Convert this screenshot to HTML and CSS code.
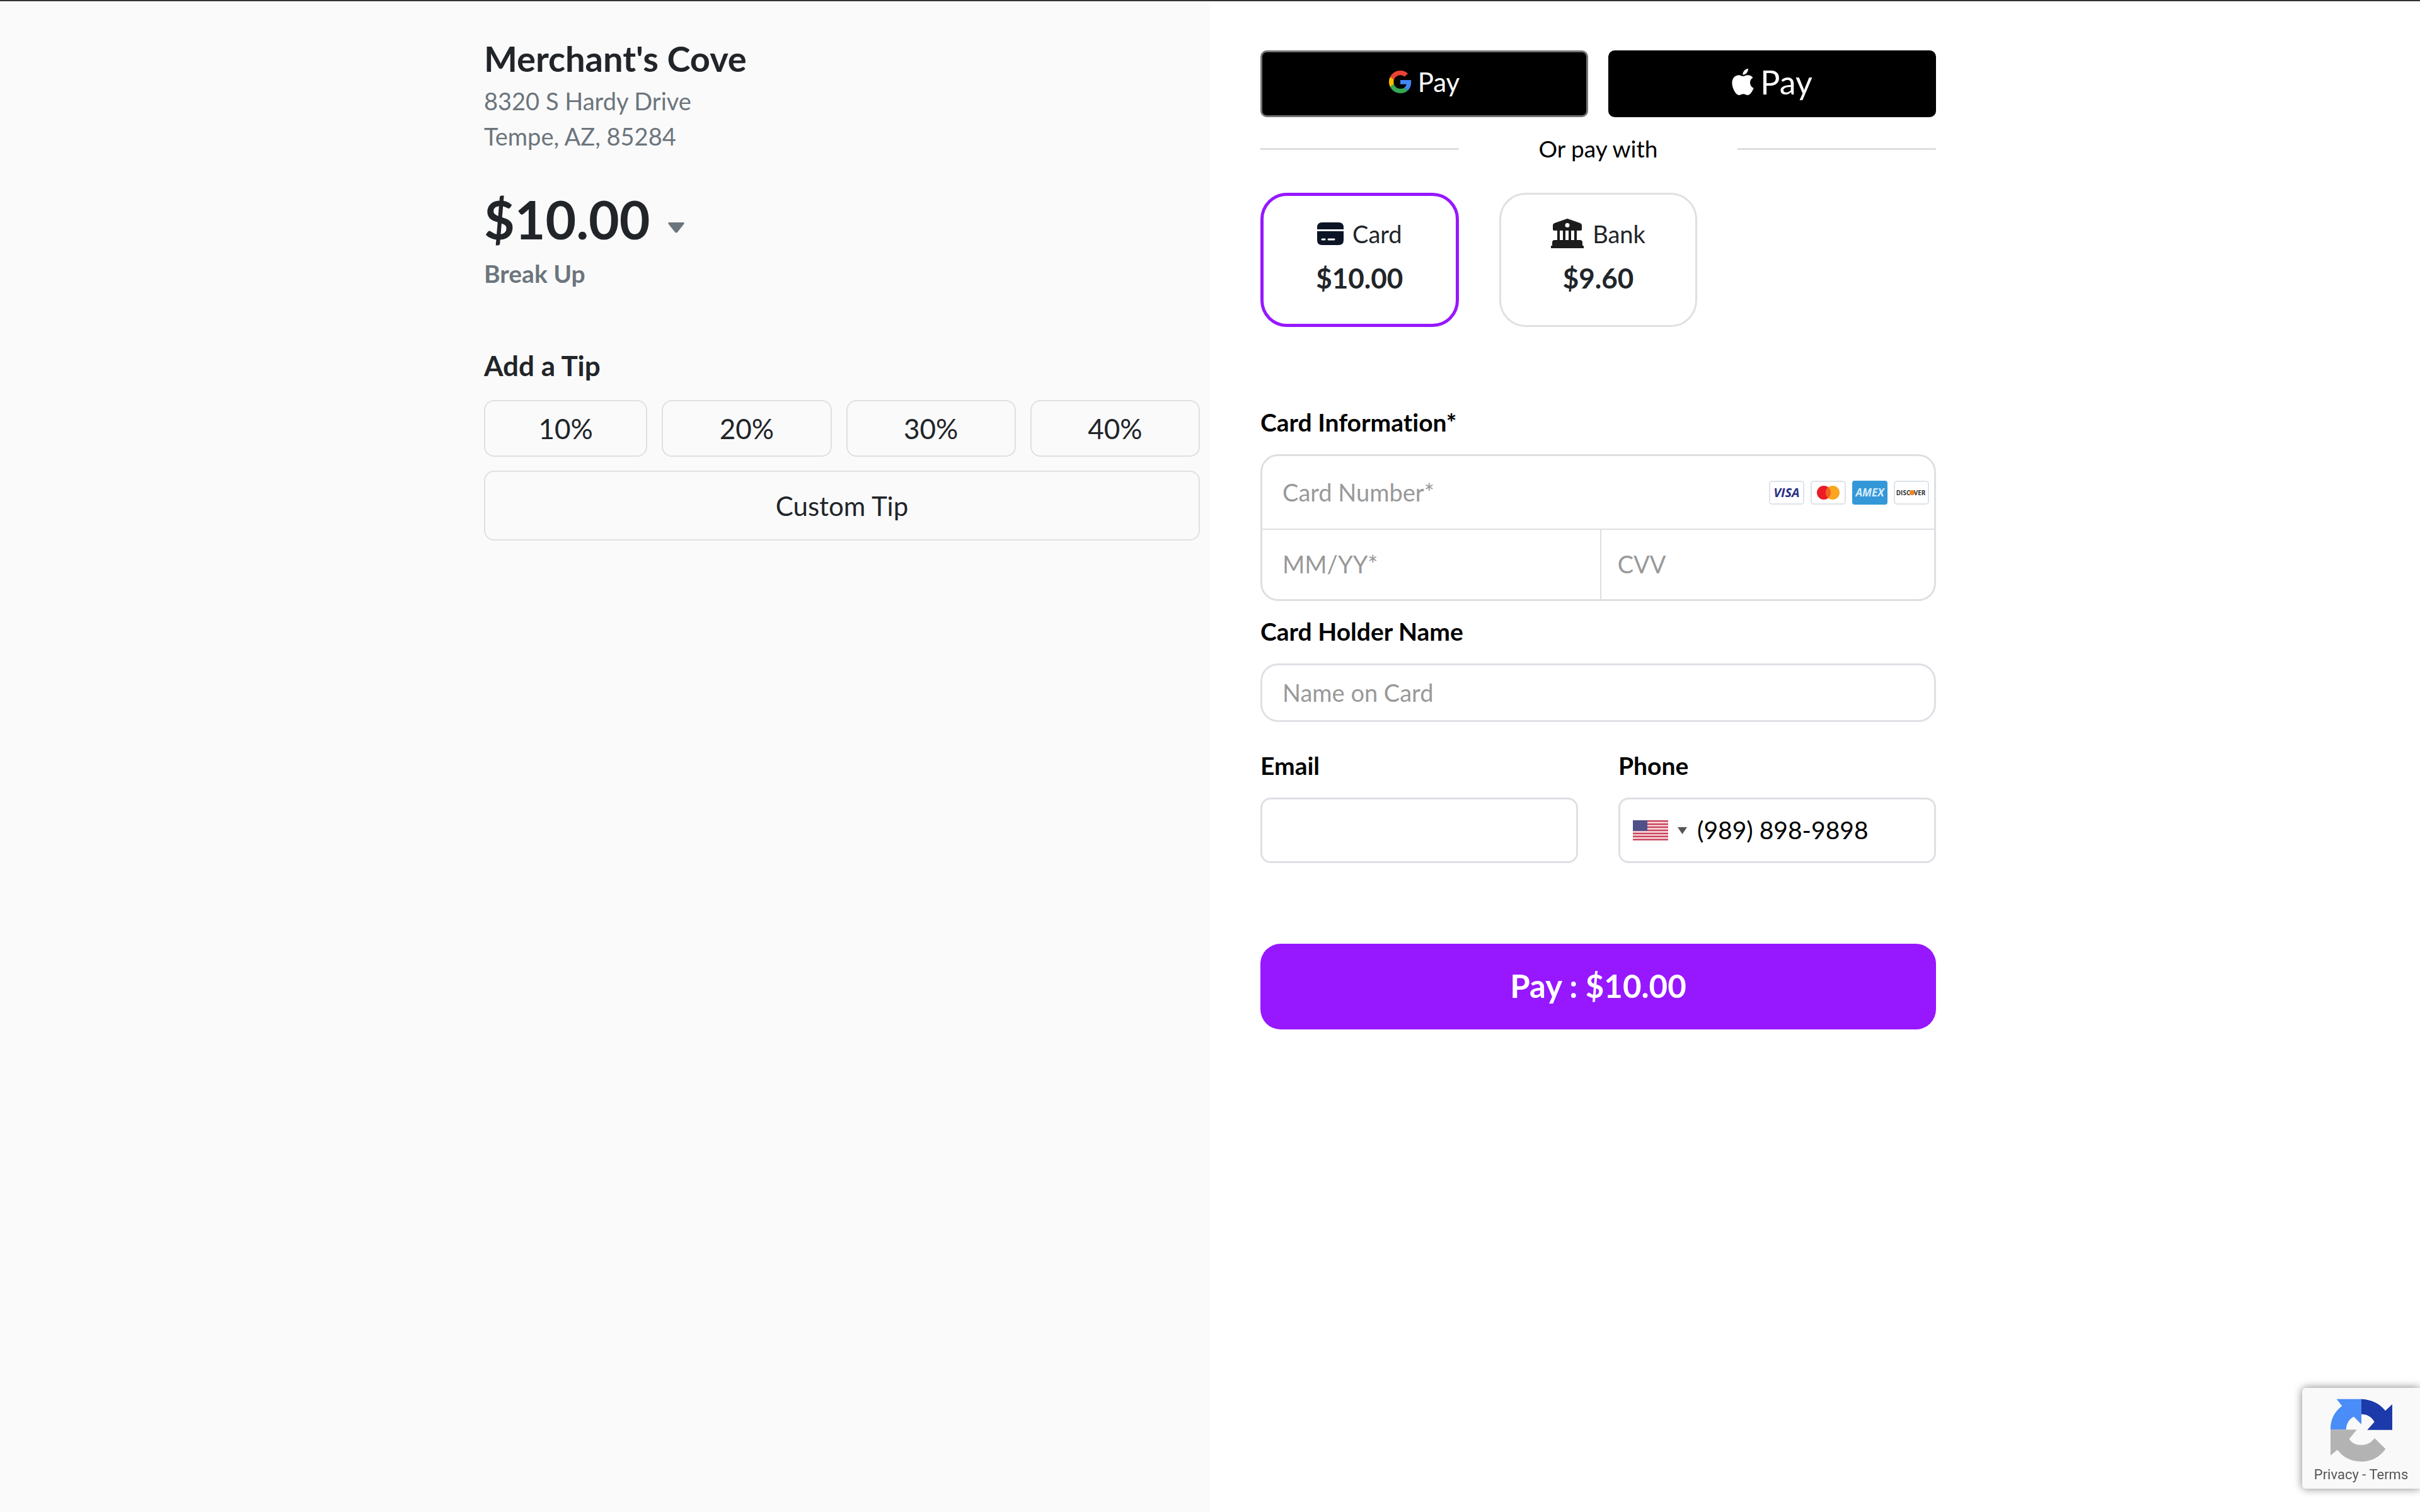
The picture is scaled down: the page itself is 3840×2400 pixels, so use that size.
FILE: index.html
```
<!DOCTYPE html>
<html lang="en">
<head>
  <meta charset="UTF-8">
  <title>Merchant's Cove</title>
  <meta name="viewport" content="width=device-width, initial-scale=1.0">
  <link rel="stylesheet" href="styles.css">
</head>
<body>
  <main class="checkout">
    <section class="summary">
      <h1>Merchant's Cove</h1>
      <p class="address">8320 S Hardy Drive<br>Tempe, AZ, 85284</p>

      <button class="amount" type="button">
        $10.00
        <svg class="amount-caret" viewBox="0 0 26 17"><path d="M2 0H24Q27 0 25 3L15 15.500Q13 17.500 11 15.500L1 3Q-1 0 2 0Z"/></svg>
      </button>
      <p class="breakup">Break Up</p>

      <h2>Add a Tip</h2>
      <div class="tips">
        <button type="button">10%</button>
        <button type="button">20%</button>
        <button type="button">30%</button>
        <button type="button">40%</button>
      </div>
      <button class="custom-tip" type="button">Custom Tip</button>
    </section>

    <form class="payment">
      <div class="wallets">
        <button class="gpay" type="button" aria-label="Google Pay">
          <svg viewBox="0 0 48 48">
            <path fill="#EA4335" d="M24 9.500c3.540 0 6.710 1.220 9.210 3.600l6.850-6.850C35.900 2.380 30.470 0 24 0 14.620 0 6.510 5.380 2.560 13.220l7.980 6.190C12.430 13.720 17.740 9.500 24 9.500z"/>
            <path fill="#4285F4" d="M46.980 24.550c0-1.570-.15-3.090-.38-4.550H24v9.020h12.940c-.58 2.960-2.260 5.480-4.780 7.180l7.730 6c4.510-4.180 7.090-10.360 7.090-17.650z"/>
            <path fill="#FBBC05" d="M10.530 28.590c-.48-1.450-.76-2.990-.76-4.590s.27-3.140.76-4.590l-7.980-6.190C.92 16.460 0 20.120 0 24c0 3.880.92 7.540 2.560 10.780l7.970-6.190z"/>
            <path fill="#34A853" d="M24 48c6.480 0 11.930-2.130 15.890-5.810l-7.730-6c-2.150 1.450-4.920 2.300-8.160 2.300-6.260 0-11.570-4.220-13.470-9.910l-7.980 6.190C6.510 42.620 14.620 48 24 48z"/>
          </svg>
          <span>Pay</span>
        </button>
        <button class="applepay" type="button" aria-label="Apple Pay">
          <svg viewBox="2 0 20 24"><path fill="#fff" d="M12.152 6.896c-.948 0-2.415-1.078-3.960-1.040-2.040.027-3.910 1.183-4.961 3.014-2.117 3.675-.546 9.103 1.519 12.090 1.013 1.454 2.208 3.090 3.792 3.039 1.520-.065 2.090-.987 3.935-.987 1.831 0 2.350.987 3.960.948 1.637-.026 2.676-1.480 3.676-2.948 1.156-1.688 1.636-3.325 1.662-3.415-.039-.013-3.182-1.221-3.220-4.857-.026-3.040 2.480-4.494 2.597-4.559-1.429-2.090-3.623-2.324-4.390-2.376-2-.156-3.675 1.090-4.610 1.090zM15.530 3.830c.843-1.012 1.400-2.427 1.245-3.830-1.207.052-2.662.805-3.532 1.818-.78.896-1.454 2.338-1.273 3.714 1.338.104 2.715-.688 3.559-1.701"/></svg>
          <span>Pay</span>
        </button>
      </div>

      <div class="divider"><hr><span>Or pay with</span><hr></div>

      <div class="methods">
        <button class="method selected" type="button" aria-pressed="true">
          <span class="method-name">
            <svg class="card-icon" viewBox="0 0 42 36"><path fill="#0c1526" d="M0 11V8Q0 0 8 0H34Q42 0 42 8V11ZM0 14H42V28Q42 36 34 36H8Q0 36 0 28Z"/><path stroke="#fff" stroke-width="3" stroke-linecap="round" d="M8 27H12M18 27H27"/></svg>
            Card
          </span>
          <strong>$10.00</strong>
        </button>
        <button class="method" type="button" aria-pressed="false">
          <span class="method-name">
            <svg class="bank-icon" viewBox="0 0 52 47"><path fill="#1c1c1c" fill-rule="evenodd" d="M26 0L46 7Q49 8 49 11V17Q49 19 47 19H5Q3 19 3 17V11Q3 8 6 7ZM26 7A3.500 3.500 0 0 0 26 14A3.500 3.500 0 0 0 26 7Z"/><path fill="#1c1c1c" d="M10 19H14V35H10ZM19 19H23V35H19ZM28 19H32V35H28ZM37 19H41V35H37ZM6 34H46Q50 34 50 38V43H52V47H0V43H2V38Q2 34 6 34Z"/></svg>
            Bank
          </span>
          <strong>$9.60</strong>
        </button>
      </div>

      <label class="field-label card-label" for="card-number">Card Information*</label>
      <div class="card-box">
        <div class="card-number">
          <input id="card-number" type="text" placeholder="Card Number*">
          <span class="brands">
            <svg viewBox="0 0 56 38"><rect class="brand-frame" x="1" y="1" width="54" height="36" rx="4"/><text class="visa" x="28" y="26">VISA</text></svg>
            <svg viewBox="0 0 56 38"><rect class="brand-frame" x="1" y="1" width="54" height="36" rx="4"/><circle cx="21" cy="19" r="11" fill="#eb1c26"/><circle cx="35" cy="19" r="11" fill="#faa61e"/><path fill="#f26122" d="M28 10.500a11 11 0 0 1 0 17a11 11 0 0 1 0-17z"/></svg>
            <svg viewBox="0 0 56 38"><rect x="0" y="0" width="56" height="38" rx="4" fill="#3498d8"/><text class="amex" x="28" y="25">AMEX</text></svg>
            <svg viewBox="0 0 56 38"><rect class="brand-frame" x="1" y="1" width="54" height="36" rx="4"/><text class="discover" x="15" y="23">DISC</text><text class="discover" x="41" y="23">VER</text><circle cx="29" cy="19" r="4" fill="#f58220"/></svg>
          </span>
        </div>
        <div class="card-row">
          <input type="text" placeholder="MM/YY*" aria-label="Expiry date">
          <input type="text" placeholder="CVV" aria-label="CVV">
        </div>
      </div>

      <label class="field-label holder-label" for="holder">Card Holder Name</label>
      <input class="holder" id="holder" type="text" placeholder="Name on Card">

      <div class="contact">
        <div>
          <label class="field-label" for="email">Email</label>
          <input class="email" id="email" type="email">
        </div>
        <div>
          <label class="field-label" for="phone">Phone</label>
          <div class="phone">
            <button type="button" aria-label="Country">
              <svg class="flag" viewBox="0 0 56 32">
                <rect width="56" height="32" fill="#fbdfe2"/>
                <path stroke="#c9455c" stroke-width="2.500" d="M0 1.200H56M0 6.200H56M0 11.100H56M0 16H56M0 20.900H56M0 25.800H56M0 30.700H56"/>
                <rect width="23" height="17" fill="#50508a"/>
              </svg>
              <svg class="flag-caret" viewBox="0 0 15 11"><path fill="#555" d="M0 0H15L7.500 11Z"/></svg>
            </button>
            <input id="phone" type="tel" value="(989) 898-9898">
          </div>
        </div>
      </div>

      <button class="pay" type="submit">Pay : $10.00</button>
    </form>
  </main>

  <aside class="recaptcha">
    <svg viewBox="203 120 294 300">
      <path fill="#4a8df8" d="M350 122H232L258 155C220 182 203 220 203 268H277C278 240 292 216 314 206L350 243Z"/>
      <path fill="#1c3aa9" d="M350 122C398 124 440 145 464 178L497 147V269H378L412 231C398 205 375 194 350 194Z"/>
      <path fill="#b3b3b3" d="M203 268H328L292 312C305 333 325 341 350 341C375 341 397 330 413 308L465 360C438 397 400 420 350 420C302 420 262 400 236 364L203 391Z"/>
    </svg>
    <div><a href="#">Privacy</a> - <a href="#">Terms</a></div>
  </aside>
</body>
</html>
```
FILE: styles.css
```
* { box-sizing: border-box; }
body {
  margin: 0;
  font-family: "Lato", sans-serif;
  font-size: 38px;
  font-variant-ligatures: none;
  line-height: 56px;
  color: #212529;
  background-color: #fff;
}
h1, h2, p { margin: 0; }
button, input { font: inherit; color: inherit; margin: 0; }
button { padding: 0; border: none; background: none; cursor: pointer; }
svg { display: block; flex: none; }

.checkout {
  display: grid;
  grid-template-columns: 1fr 1fr;
  min-height: 100vh;
  border-top: 2px solid #333;
}

/* Left side */
.summary { padding: 58px 16px 58px 40%; background-color: #fafafa; }
.summary h1 { font-size: 56px; line-height: 66px; margin-bottom: 6px; }
.address { color: #6c757d; }
.amount {
  display: flex;
  align-items: center;
  gap: 28px;
  margin-top: 54px;
  font-size: 84px;
  font-weight: bold;
  line-height: 100px;
}
.amount-caret { width: 26px; margin-top: 26px; fill: #6c757d; }
.breakup { margin-top: 8px; color: #6c757d; font-size: 39px; font-weight: bold; }
.summary h2 { margin: 90px 0 27px; font-size: 44px; line-height: 56px; }
.tips { display: grid; grid-template-columns: 26fr 27fr 27fr 27fr; gap: 23px; }
.tips button, .custom-tip {
  border: 2px solid #dee0e2;
  border-radius: 16px;
}
.tips button { height: 90px; font-size: 44px; }
.custom-tip { width: 100%; height: 111px; margin-top: 22px; font-size: 42px; }

/* Right side */
.payment { padding: 78px 40% 78px 80px; }
.wallets { display: grid; grid-template-columns: 1fr 1fr; gap: 32px; }
.wallets button {
  display: flex;
  align-items: center;
  justify-content: center;
  gap: 10px;
  height: 106px;
  padding-bottom: 6px;
  border-radius: 10px;
  background-color: #000;
  color: #fff;
}
.wallets .gpay { border: 3px solid #757575; font-size: 42px; }
.gpay svg { width: 36px; }
.applepay { font-size: 52px; }
.applepay svg { width: 35px; }

.divider, .methods {
  display: grid;
  grid-template-columns: 1fr 1fr 1fr;
  column-gap: 64px;
}
.divider { align-items: center; margin: 22px 0 42px; font-size: 37px; color: #000; text-align: center; }
.divider hr { width: 100%; margin: 0; border: none; border-top: 3px solid #dedede; }

.method {
  display: flex;
  flex-direction: column;
  align-items: center;
  justify-content: center;
  gap: 14px;
  height: 213px;
  padding-bottom: 14px;
  border: 3px solid #e0e0e0;
  border-radius: 42px;
}
.method.selected { border: 5px solid #9717ff; }
.method-name { display: flex; align-items: center; gap: 14px; }
.method strong { font-size: 44px; }
.card-icon { width: 42px; }
.bank-icon { width: 52px; }

.field-label { display: block; margin-bottom: 23px; font-size: 39px; font-weight: bold; color: #000; }
.card-label { margin-top: 123px; }
.holder-label { margin-top: 20px; }
.payment input { width: 100%; min-width: 0; outline: none; background: none; color: #000; }
.payment input::placeholder { color: #999; opacity: 1; }

.card-box { border: 3px solid #dedfe3; border-radius: 28px; }
.card-box input { border: none; padding: 0 32px 2px; }
.card-number { display: flex; align-items: center; height: 117px; padding-right: 8px; border-bottom: 2px solid #dedfe3; }
.brands { display: flex; gap: 10px; }
.brands svg { width: 56px; }
.brand-frame { fill: #fff; stroke: #dde3e8; stroke-width: 2; }
.brands text { text-anchor: middle; font-family: "Open Sans", sans-serif; font-weight: bold; }
.visa { font-size: 20px; font-style: italic; fill: #2b2f86; }
.amex { font-size: 17px; font-style: italic; fill: #d6ecfb; }
.discover { font-size: 10px; fill: #333; }
.card-row { display: flex; height: 110px; }
.card-row input + input { border-left: 2px solid #dedfe3; padding: 0 26px 2px; }

.holder { height: 93px; padding: 0 32px 2px; border: 3px solid #dfe0e5; border-radius: 28px; }
.contact { display: grid; grid-template-columns: 1fr 1fr; gap: 64px; margin-top: 41px; }
.email, .phone { height: 104px; border: 3px solid #dfe0e5; border-radius: 16px; }
.email { padding: 0 32px; }
.phone { display: flex; align-items: center; padding-left: 20px; }
.phone button { display: flex; align-items: center; gap: 15px; margin-right: 16px; }
.phone input { padding: 0 0 2px; border: none; font-size: 39px; }
.flag { width: 56px; }
.flag-caret { width: 15px; }

.pay {
  width: 100%;
  height: 136px;
  margin-top: 128px;
  padding-bottom: 2px;
  border-radius: 32px;
  background-color: #9717ff;
  color: #fff;
  font-size: 51px;
  font-weight: bold;
}

/* Badge pinned to the corner */
.recaptcha {
  position: fixed;
  right: 0;
  bottom: 37px;
  width: 187px;
  height: 160px;
  padding-top: 17px;
  border-radius: 6px 0 0 6px;
  background-color: #f9f9f9;
  box-shadow: 0 0 14px #808080;
  font-family: "Roboto", sans-serif;
  font-size: 22px;
  line-height: 28px;
  text-align: center;
  color: #555;
}
.recaptcha svg { width: 98px; margin: 0 auto 7px 45px; }
.recaptcha a { color: inherit; text-decoration: none; }
```
